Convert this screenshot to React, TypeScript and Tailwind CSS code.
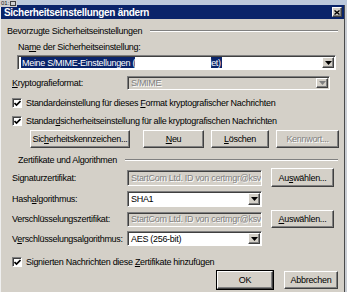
import type { ReactNode } from "react";

const raised =
  "border border-t-white border-l-white border-r-[#404040] border-b-[#404040] shadow-[inset_-1px_-1px_0_#808080] bg-[#d4d0c8]";
const sunken =
  "border border-t-[#808080] border-l-[#808080] border-r-white border-b-white shadow-[inset_1px_1px_0_#404040]";
const grayText = "text-[#808080] [text-shadow:1px_1px_0_#fff]";

function Arrow({ disabled }: { disabled?: boolean }) {
  return (
    <div className={`${raised} flex h-full w-[12px] shrink-0 items-center justify-center`}>
      <svg width="7" height="4" viewBox="0 0 7 4">
        <path d="M0 0h7L3.5 4z" fill={disabled ? "#808080" : "#000"} />
      </svg>
    </div>
  );
}

function Combo({
  children,
  disabled,
  className = "",
}: {
  children: ReactNode;
  disabled?: boolean;
  className?: string;
}) {
  return (
    <div
      className={`${sunken} flex items-stretch p-[1px] ${disabled ? "bg-[#d4d0c8]" : "bg-white"} ${className}`}
    >
      <div className="flex min-w-0 flex-1 items-center overflow-hidden whitespace-nowrap pl-[2px]">
        {children}
      </div>
      <Arrow disabled={disabled} />
    </div>
  );
}

function Button({
  children,
  disabled,
  className = "",
}: {
  children: ReactNode;
  disabled?: boolean;
  className?: string;
}) {
  return (
    <div
      className={`${raised} flex shrink-0 items-center justify-center whitespace-nowrap ${disabled ? grayText : ""} ${className}`}
    >
      {children}
    </div>
  );
}

function Check({ children }: { children: ReactNode }) {
  return (
    <div className="flex h-[12px] items-center pl-[11px]">
      <div className={`${sunken} flex h-[10px] w-[10px] items-center justify-center bg-white`}>
        <svg width="7" height="7" viewBox="0 0 7 7">
          <path d="M0.5 3l2 2L6.5 1" stroke="#000" strokeWidth="1.7" fill="none" />
        </svg>
      </div>
      <span className="ml-[4px] whitespace-nowrap">{children}</span>
    </div>
  );
}

function GroupHeader({ label, className = "" }: { label: string; className?: string }) {
  return (
    <div className={`flex h-[12px] items-center ${className}`}>
      <span className="whitespace-nowrap">{label}</span>
      <div className="ml-[8px] mr-[6px] flex-1 border-t border-b border-t-[#808080] border-b-white" />
    </div>
  );
}

function FieldRow({
  label,
  children,
  className = "",
}: {
  label: ReactNode;
  children: ReactNode;
  className?: string;
}) {
  return (
    <div className={`flex items-center pl-[11px] ${className}`}>
      <div className="w-[115px] shrink-0 whitespace-nowrap">{label}</div>
      {children}
    </div>
  );
}

export default function App() {
  return (
    <div className="relative h-[292px] w-[347px] overflow-hidden bg-[#c9cdd3] font-['Liberation_Sans',Arial,sans-serif] text-[9px] leading-[12px] tracking-[-0.3px] text-black">
      <div className="h-[5px] bg-[#bcc9dc]" />
      <div className="flex h-[287px] w-[345px] flex-col border-r border-r-[#4a4a4a] border-l border-l-[#f0f0f0] bg-[#d4d0c8]">
        <div className="flex h-[14px] items-center bg-[#0a246a] pl-[3px] pr-[2px]">
          <span className="flex-1 pt-[1px] text-[10px] leading-[10px] font-bold text-white">
            Sicherheitseinstellungen ändern
          </span>
          <div className={`${raised} flex h-[10px] w-[10px] items-center justify-center`}>
            <svg width="6" height="5" viewBox="0 0 6 5">
              <path d="M0.5 0.5l5 4M5.5 0.5l-5 4" stroke="#000" strokeWidth="1.4" />
            </svg>
          </div>
        </div>

        <div className="flex flex-col">
          <GroupHeader label="Bevorzugte Sicherheitseinstellungen" className="mt-[6px] pl-[6px]" />

          <div className="mt-[4px] h-[12px] pl-[17px]">
            Na<u>m</u>e der Sicherheitseinstellung:
          </div>

          <Combo className="ml-[16px] mt-[2px] h-[15px] w-[319px]">
            <span className="bg-[#0a246a] pl-[1px] text-white">Meine S/MIME-Einstellungen (</span>
            <span className="h-[12px] w-[76px] shrink-0 rounded-full bg-white blur-[1px]" />
            <span className="bg-[#0a246a] pr-[1px] text-white">et)</span>
          </Combo>

          <FieldRow label={<><u>K</u>ryptografieformat:</>} className="mt-[6px] h-[14px]">
            <Combo disabled className="h-[14px] w-[203px]">
              <span className={grayText}>S/MIME</span>
            </Combo>
          </FieldRow>

          <div className="mt-[7px]">
            <Check>
              Standardeinstellung für dieses <u>F</u>ormat kryptografischer Nachrichten
            </Check>
          </div>
          <div className="mt-[6px]">
            <Check>
              Standar<u>d</u>sicherheitseinstellung für alle kryptografischen Nachrichten
            </Check>
          </div>

          <div className="mt-[3px] flex h-[18px] pl-[29px]">
            <Button className="w-[100px]">
              Sic<u>h</u>erheitskennzeichen...
            </Button>
            <Button className="ml-[13px] w-[61px]">
              <u>N</u>eu
            </Button>
            <Button className="ml-[7px] w-[58px]">
              <u>L</u>öschen
            </Button>
            <Button disabled className="ml-[7px] w-[63px]">
              Kennwort...
            </Button>
          </div>

          <GroupHeader label="Zertifikate und Algorithmen" className="mt-[6px] pl-[17px]" />

          <FieldRow label="Signaturzertifikat:" className="mt-[2px] h-[19px]">
            <div className={`${sunken} flex h-[16px] w-[135px] items-center overflow-hidden whitespace-nowrap pl-[3px]`}>
              <span className={grayText}>StartCom Ltd. ID von certmgr@ksvi</span>
            </div>
            <Button className="ml-[9px] h-[19px] w-[63px]">
              Au<u>s</u>wählen...
            </Button>
          </FieldRow>

          <FieldRow label={<>Hash<u>a</u>lgorithmus:</>} className="mt-[4px] h-[16px]">
            <Combo className="h-[16px] w-[135px]">SHA1</Combo>
          </FieldRow>

          <FieldRow label="Verschlüsselungszertifikat:" className="mt-[3px] h-[18px]">
            <div className={`${sunken} flex h-[15px] w-[135px] items-center overflow-hidden whitespace-nowrap pl-[3px]`}>
              <span className={grayText}>StartCom Ltd. ID von certmgr@ksvi</span>
            </div>
            <Button className="ml-[9px] h-[18px] w-[63px]">
              <u>A</u>uswählen...
            </Button>
          </FieldRow>

          <FieldRow label={<>V<u>e</u>rschlüsselungsalgorithmus:</>} className="mt-[3px] h-[15px]">
            <Combo className="h-[15px] w-[135px]">AES (256-bit)</Combo>
          </FieldRow>

          <div className="mt-[10px]">
            <Check>
              Signierten Nachrichten diese <u>Z</u>ertifikate hinzufügen
            </Check>
          </div>

          <div className="mt-[2px] flex h-[20px] items-center pl-[215px]">
            <div className="h-[20px] w-[58px] border border-black">
              <Button className="h-full w-full">OK</Button>
            </div>
            <Button className="ml-[10px] h-[18px] w-[54px]">Abbrechen</Button>
          </div>
        </div>
      </div>

      <div className="absolute left-0 top-0 flex h-[7px] items-center gap-[1px] bg-[#d0d0d0] px-[1px] text-[6px] leading-[7px] tracking-normal text-[#202020]">
        <span>01:</span>
        <span className="h-[5px] w-[6px] border border-[#404040]" />
      </div>
    </div>
  );
}
